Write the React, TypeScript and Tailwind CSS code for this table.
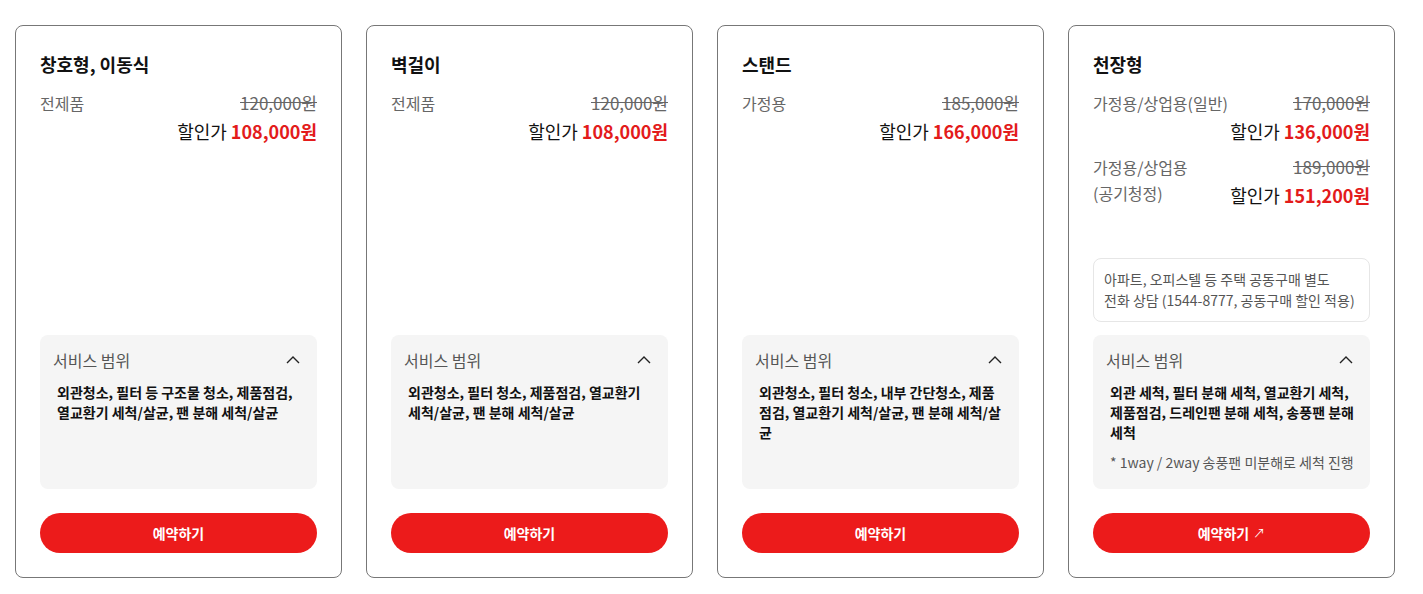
interface PriceGroup {
  label: string[];
  original: string;
  discount: string;
}

interface Plan {
  title: string;
  prices: PriceGroup[];
  notice?: string[];
  scope: string;
  footnote?: string;
  external?: boolean;
}

const plans: Plan[] = [
  {
    title: "창호형, 이동식",
    prices: [{ label: ["전제품"], original: "120,000원", discount: "108,000원" }],
    scope: "외관청소, 필터 등 구조물 청소, 제품점검, 열교환기 세척/살균, 팬 분해 세척/살균",
  },
  {
    title: "벽걸이",
    prices: [{ label: ["전제품"], original: "120,000원", discount: "108,000원" }],
    scope: "외관청소, 필터 청소, 제품점검, 열교환기 세척/살균, 팬 분해 세척/살균",
  },
  {
    title: "스탠드",
    prices: [{ label: ["가정용"], original: "185,000원", discount: "166,000원" }],
    scope: "외관청소, 필터 청소, 내부 간단청소, 제품점검, 열교환기 세척/살균, 팬 분해 세척/살균",
  },
  {
    title: "천장형",
    prices: [
      { label: ["가정용/상업용(일반)"], original: "170,000원", discount: "136,000원" },
      { label: ["가정용/상업용", "(공기청정)"], original: "189,000원", discount: "151,200원" },
    ],
    notice: ["아파트, 오피스텔 등 주택 공동구매 별도", "전화 상담 (1544-8777, 공동구매 할인 적용)"],
    scope: "외관 세척, 필터 분해 세척, 열교환기 세척, 제품점검, 드레인팬 분해 세척, 송풍팬 분해 세척",
    footnote: "* 1way / 2way 송풍팬 미분해로 세척 진행",
    external: true,
  },
];

function PriceBlock({ group }: { group: PriceGroup }) {
  return (
    <div className="flex justify-between">
      <div className="flex flex-col text-[16px] leading-[26px] text-[#666]">
        {group.label.map((l) => (
          <span key={l}>{l}</span>
        ))}
      </div>
      <div className="flex flex-col items-end">
        <span className="text-[17px] leading-[26px] text-[#666] line-through">{group.original}</span>
        <span className="text-[18px] leading-[30px] text-[#111]">
          할인가 <b className="font-bold text-[#e31b1b]">{group.discount}</b>
        </span>
      </div>
    </div>
  );
}

function PlanCard({ plan }: { plan: Plan }) {
  return (
    <div className="flex h-[553px] w-[327px] flex-col rounded-lg border border-[#777] bg-white px-6 pb-6 pt-[24px]">
      <h3 className="text-[18px] font-bold leading-[28px] text-[#111]">{plan.title}</h3>
      <div className="mt-[12px] flex flex-col gap-[8px]">
        {plan.prices.map((g) => (
          <PriceBlock key={g.original} group={g} />
        ))}
      </div>

      <div className="flex-1" />

      {plan.notice && (
        <div className="mb-[13px] rounded-lg border border-[#e6e6e6] px-[10px] py-[10px] text-[14px] leading-[21px] text-[#555]">
          {plan.notice.map((n) => (
            <p key={n} className="whitespace-nowrap">{n}</p>
          ))}
        </div>
      )}

      <div className="h-[154px] rounded-lg bg-[#f5f5f5] px-[13px] pb-4 pt-[13px]">
        <div className="flex items-center justify-between pr-1">
          <span className="text-[16px] leading-[24px] text-[#555]">서비스 범위</span>
          <svg width="14" height="8" viewBox="0 0 14 8" fill="none" className="text-[#222]">
            <polyline points="1,7 7,1 13,7" stroke="currentColor" strokeWidth="1.4" />
          </svg>
        </div>
        <p className="mt-[10px] pl-1 text-[14px] font-bold leading-[20px] text-[#111]">{plan.scope}</p>
        {plan.footnote && (
          <p className="mt-[10px] whitespace-nowrap pl-1 text-[14px] leading-[20px] text-[#555]">{plan.footnote}</p>
        )}
      </div>

      <button className="mt-6 flex h-10 w-full items-center justify-center gap-1 rounded-full bg-[#ec1b1b] text-[14px] font-bold text-white">
        예약하기
        {plan.external && <span className="text-[12px] font-normal">↗</span>}
      </button>
    </div>
  );
}

export default function App() {
  return (
    <div
      className="min-h-screen bg-white pl-[15px] pt-[25px]"
      style={{ fontFamily: '"Noto Sans CJK KR", "Noto Sans", sans-serif' }}
    >
      <div className="flex gap-6">
        {plans.map((p) => (
          <PlanCard key={p.title} plan={p} />
        ))}
      </div>
    </div>
  );
}
